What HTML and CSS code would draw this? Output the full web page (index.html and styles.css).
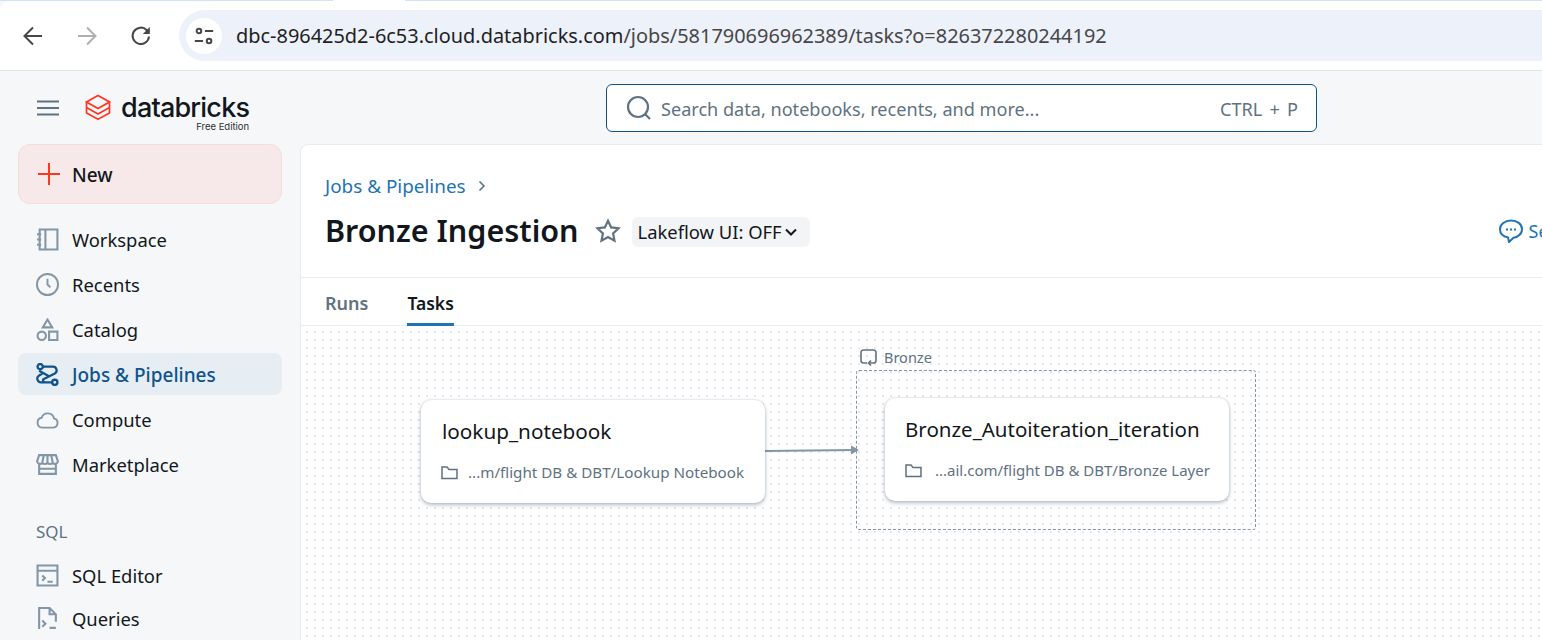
FILE: index.html
```html
<!doctype html>
<html>
<head>
  <title>Bronze Ingestion</title>
  <meta charset="utf-8">
  <link rel="stylesheet" href="styles.css">
</head>
<body>
  <div class="tabstrip">
    <div class="tabstrip-part"></div>
    <div class="tabstrip-gap"></div>
    <div class="tabstrip-rest"></div>
  </div>
  <div class="toolbar">
    <svg class="nav-icon" viewBox="0 0 24 24" fill="none" stroke="#474747" stroke-width="2"><path d="M21 12H4M12 3.500 3.500 12l8.500 8.500"/></svg>
    <svg class="nav-icon" viewBox="0 0 24 24" fill="none" stroke="#b0b0b0" stroke-width="2"><path d="M3 12h17M12 3.500l8.500 8.500-8.500 8.500"/></svg>
    <svg class="nav-icon" viewBox="0 0 24 24" fill="none" stroke="#474747" stroke-width="2"><path d="M20 12.500A8.200 8.200 0 1 1 17.800 6.200L20 8.500"/><path d="M20.800 3v7h-7" stroke="none" fill="#474747"/></svg>
    <div class="omnibox">
      <div class="site-btn">
        <svg width="22" height="22" viewBox="0 0 24 24" fill="none" stroke="#474747" stroke-width="2.200"><circle cx="6.500" cy="6.500" r="2.500"/><path d="M13 6.500h9M2 17.500h9"/><circle cx="17.500" cy="17.500" r="2.500"/></svg>
      </div>
      <div class="url"><span class="url-host">dbc-896425d2-6c53.cloud.databricks.com</span>/jobs/581790696962389/tasks?o=826372280244192</div>
    </div>
  </div>

  <div class="app">
    <div class="topbar">
      <div class="brand">
        <svg class="burger" viewBox="0 0 22 16" fill="none" stroke="#5f7281" stroke-width="2"><path d="M0 1.500h22M0 8h22M0 14.500h22"/></svg>
        <svg class="logo-mark" viewBox="0 0 26 26" fill="none" stroke="#ff3621" stroke-width="1.700"><path d="M1.500 8 13 1.500 24.500 8 13 14.500 1.500 8Z"/><path d="M1.500 9v4.500L13 20l11.500-6.500V9"/><path d="M1.500 14v5L13 25.200 24.500 19v-5"/></svg>
        <div class="logo-text">
          <span class="logo-name">databricks</span>
          <span class="logo-sub">Free Edition</span>
        </div>
      </div>
      <div class="search">
        <svg width="28" height="28" viewBox="0 0 28 28" fill="none" stroke="#5f7281" stroke-width="2.200"><circle cx="13" cy="13" r="10"/><path d="m20 20 5 5"/></svg>
        <span class="search-text">Search data, notebooks, recents, and more...</span>
        <span class="search-key">CTRL + P</span>
      </div>
    </div>

    <div class="shell">
      <div class="sidebar">
        <div class="new-btn">
          <svg width="22" height="22" viewBox="0 0 22 22" fill="none" stroke="#ff3621" stroke-width="2"><path d="M11 0v22M0 11h22"/></svg>
          <span class="new-label">New</span>
        </div>
        <div class="nav">
          <div class="nav-item">
            <svg class="item-icon" viewBox="0 0 22 22" fill="none" stroke="#8296a5" stroke-width="2"><path d="M3.500 1.500h17v19h-17zM9 1.500v19M1 6h4M1 11h4M1 16h4"/></svg>
            <span>Workspace</span>
          </div>
          <div class="nav-item">
            <svg class="item-icon" viewBox="0 0 24 24" fill="none" stroke="#8296a5" stroke-width="2"><circle cx="12" cy="12" r="11"/><path d="M12 6v6l3 3"/></svg>
            <span>Recents</span>
          </div>
          <div class="nav-item">
            <svg class="item-icon" viewBox="0 0 22 22" fill="none" stroke="#8296a5" stroke-width="2"><path d="m11 1.500 4.500 7.500h-9zM12.500 13h8v8h-8z"/><circle cx="5.500" cy="17" r="4"/></svg>
            <span>Catalog</span>
          </div>
          <div class="nav-item nav-active">
            <svg class="item-icon" viewBox="0 0 22 22" fill="none" stroke="#0e538b" stroke-width="2.200"><circle cx="4" cy="3.500" r="2.500"/><circle cx="18" cy="18.500" r="2.500"/><path d="M6.500 3.500H16a3.500 3.500 0 0 1 2 6.500L7 15.500a2.500 2.500 0 0 0 1 3h7.500M3 7.500l9 5M16 18.500H5a3.500 3.500 0 0 1-2-6.500l3-2"/></svg>
            <span>Jobs &amp; Pipelines</span>
          </div>
          <div class="nav-item">
            <svg class="item-icon" viewBox="0 0 24 24" fill="none" stroke="#8296a5" stroke-width="2"><path d="M6.500 20.500a5.200 5.200 0 0 1-.6-10.300 6.700 6.700 0 0 1 12.900.7 4.900 4.900 0 0 1-.6 9.600z"/></svg>
            <span>Compute</span>
          </div>
          <div class="nav-item">
            <svg class="item-icon" viewBox="0 0 22 22" fill="none" stroke="#8296a5" stroke-width="2"><path d="M3 2h16l2 6a3 3 0 0 1-5 1.500 3.500 3.500 0 0 1-5 0 3.500 3.500 0 0 1-5 0A3 3 0 0 1 1 8zM3 11v9h16v-9M7.500 2 6 9M14.500 2 16 9M11 2v7M3 15h16"/></svg>
            <span>Marketplace</span>
          </div>
        </div>
        <div class="nav-title">SQL</div>
        <div class="nav nav-sql">
          <div class="nav-item">
            <svg class="item-icon" viewBox="0 0 22 22" fill="none" stroke="#8296a5" stroke-width="2"><path d="M1.500 1.500h19v19h-19zM1.500 6.500h19M6 11l2.500 2.500L6 16M11 17h5"/></svg>
            <span>SQL Editor</span>
          </div>
          <div class="nav-item">
            <svg class="item-icon" viewBox="0 0 22 22" fill="none" stroke="#8296a5" stroke-width="2"><path d="M3 21V1h10l6 6v7M13 1v6h6M6 13l3 3-3 3M13 20h6"/></svg>
            <span>Queries</span>
          </div>
        </div>
      </div>

      <div class="main">
        <div class="job-head">
          <div class="crumb">
            <span>Jobs &amp; Pipelines</span>
            <svg width="8" height="12" viewBox="0 0 8 12" fill="none" stroke="#5f7281" stroke-width="1.600"><path d="m1.500 1.500 4.500 4.500-4.500 4.500"/></svg>
          </div>
          <div class="title-row">
            <h1>Bronze Ingestion</h1>
            <svg class="star" viewBox="0 0 24 24" fill="none" stroke="#5f7281" stroke-width="2"><path d="m12 2.500 2.900 6.200 6.800.8-5 4.700 1.300 6.800-6-3.400-6 3.400 1.300-6.800-5-4.700 6.800-.8z"/></svg>
            <div class="lakeflow">
              Lakeflow UI: OFF
              <svg width="12" height="8" viewBox="0 0 12 8" fill="none" stroke="#11171c" stroke-width="2"><path d="m1 1.500 5 5 5-5"/></svg>
            </div>
            <div class="feedback">
              <svg width="24" height="24" viewBox="0 0 24 24" fill="none" stroke="#2272b4" stroke-width="2"><path d="M12 1.500c6 0 11 3.500 11 8.700s-5 8.300-8.500 8.600L10 23l-1-4.500c-4-.8-8-3.500-8-8.300S6 1.500 12 1.500z"/><path d="M7 10.500h2M11 10.500h2M15 10.500h2"/></svg>
              <span>Send feedback</span>
            </div>
          </div>
        </div>
        <div class="tabs">
          <div class="tab">Runs</div>
          <div class="tab tab-active">Tasks</div>
        </div>

        <div class="canvas">
          <svg class="edge" width="100" height="12" viewBox="0 0 100 12">
            <path d="M0 7 90 6" stroke="#8296a5" stroke-width="2" fill="none"/>
            <path d="M86 1.500 94 6l-8 4.500z" fill="#8296a5"/>
          </svg>

          <div class="group-label">
            <svg width="17" height="17" viewBox="0 0 17 17" fill="none" stroke="#5f7281" stroke-width="1.600"><path d="M7 14H3.500A2.500 2.500 0 0 1 1 11.500v-8A2.500 2.500 0 0 1 3.500 1h10A2.500 2.500 0 0 1 16 3.500v8a2.500 2.500 0 0 1-2.500 2.500H9"/><path d="M11 11.500 8.500 14l2.500 2.500"/></svg>
            Bronze
          </div>
          <div class="group"></div>

          <div class="task task-lookup">
            <div class="task-name">lookup_notebook</div>
            <div class="task-path">
              <svg class="folder" viewBox="0 0 17 15" fill="none" stroke="#5f7281" stroke-width="1.500"><path d="M1 2h5l2 2.500h8V13.500H1z"/></svg>
              <span>...m/flight DB &amp; DBT/Lookup Notebook</span>
            </div>
          </div>

          <div class="task task-bronze">
            <div class="task-name">Bronze_Autoiteration_iteration</div>
            <div class="task-path">
              <svg class="folder" viewBox="0 0 17 15" fill="none" stroke="#5f7281" stroke-width="1.500"><path d="M1 2h5l2 2.500h8V13.500H1z"/></svg>
              <span>...ail.com/flight DB &amp; DBT/Bronze Layer</span>
            </div>
          </div>
        </div>
      </div>
    </div>
  </div>
</body>
</html>
```

FILE: styles.css
```css
html, body {
  margin: 0;
  height: 640px;
  overflow: hidden;
}
body {
  background-color: #f6f7f9;
  color: #11171c;
  font-family: "Noto Sans", "Open Sans", Arial, sans-serif;
}
svg {
  display: block;
  flex: none;
}

/* browser chrome */
.tabstrip {
  display: flex;
  height: 1px;
}
.tabstrip-part {
  width: 333px;
  background-color: #d3e3fd;
}
.tabstrip-gap {
  width: 72px;
  background-color: #fff;
}
.tabstrip-rest {
  flex: 1;
  background-color: #d3e3fd;
}
.toolbar {
  display: flex;
  align-items: center;
  height: 69px;
  padding-left: 21px;
  background-color: #fff;
  border-bottom: 1px solid #e1e3e1;
  border-top-left-radius: 10px;
}
.nav-icon {
  width: 24px;
  height: 24px;
  margin-right: 30px;
}
.omnibox {
  display: flex;
  align-items: center;
  flex: 1;
  height: 51px;
  margin-left: -4px;
  padding-left: 7px;
  background-color: #ecf1fa;
  border-radius: 26px 0 0 26px;
}
.site-btn {
  display: flex;
  align-items: center;
  justify-content: center;
  width: 36px;
  height: 36px;
  background-color: #fff;
  border-radius: 50%;
}
.url {
  margin-left: 14px;
  font-size: 19.930px;
  color: #474747;
  white-space: nowrap;
}
.url-host {
  color: #1f1f1f;
}

/* app header */
.topbar {
  display: flex;
  align-items: center;
  height: 73px;
}
.brand {
  display: flex;
  align-items: center;
  width: 606px;
  padding-left: 37px;
  box-sizing: border-box;
}
.burger {
  width: 22px;
  height: 16px;
}
.logo-mark {
  width: 26px;
  height: 26px;
  margin-left: 26px;
  margin-top: -2px;
}
.logo-text {
  display: flex;
  flex-direction: column;
  align-items: flex-end;
  margin-left: 10px;
  margin-top: 12px;
}
.logo-name {
  font-family: Inter, sans-serif;
  font-size: 27px;
  font-weight: 500;
  line-height: 26px;
  letter-spacing: -0.800px;
}
.logo-sub {
  font-family: Inter, sans-serif;
  font-size: 9.500px;
  line-height: 11px;
  color: #2a3138;
}
.search {
  display: flex;
  align-items: center;
  width: 711px;
  height: 48px;
  box-sizing: border-box;
  padding: 0 18px 0 18px;
  background-color: #fff;
  border: 1px solid #0e538b;
  border-radius: 6px;
}
.search-text {
  flex: 1;
  margin-left: 8px;
  padding-top: 2px;
  font-size: 18.100px;
  color: #5f7281;
}
.search-key {
  padding-top: 2px;
  font-size: 18.100px;
  color: #5f7281;
  word-spacing: 2.500px;
}

/* sidebar */
.shell {
  display: flex;
}
.sidebar {
  width: 300px;
  flex: none;
  box-sizing: border-box;
  padding: 0 18px;
}
.new-btn {
  display: flex;
  align-items: center;
  gap: 12px;
  height: 60px;
  box-sizing: border-box;
  padding-left: 19px;
  font-size: 19px;
  font-weight: 500;
  background-color: #f7e9e9;
  border: 1px solid #f6dcdc;
  border-radius: 12px;
}
.new-label {
  margin-top: 2px;
}
.nav {
  display: flex;
  flex-direction: column;
  gap: 3px;
  margin-top: 14px;
}
.nav-item {
  display: flex;
  align-items: center;
  gap: 13px;
  height: 42px;
  padding-left: 18px;
  font-size: 18.400px;
  border-radius: 8px;
}
.nav-active {
  color: #0e538b;
  font-size: 19px;
  font-weight: 500;
  background-color: #e6edf3;
}
.nav-active span {
  margin-top: 2px;
}
.item-icon {
  width: 23px;
  height: 23px;
}
.nav-title {
  margin-top: 35px;
  padding-left: 18px;
  font-size: 17px;
  line-height: 24px;
  color: #5f7281;
}
.nav-sql {
  gap: 1px;
  margin-top: 10px;
}

/* job page */
.main {
  flex: 1;
  height: 496px;
  background-color: #fff;
  border-top: 1px solid #e8ecf0;
  border-left: 1px solid #e8ecf0;
  border-top-left-radius: 8px;
  min-width: 0;
  overflow: hidden;
}
.job-head {
  height: 133px;
  box-sizing: border-box;
  padding: 28px 0 0 24px;
  border-bottom: 1px solid #e8ecf0;
}
.crumb {
  display: flex;
  align-items: center;
  gap: 12px;
  font-size: 18.900px;
  line-height: 26px;
  color: #2272b4;
}
.title-row {
  display: flex;
  align-items: center;
  margin-top: 11px;
  height: 44px;
  white-space: nowrap;
}
h1 {
  margin: 0 0 4px;
  font-size: 30.500px;
  font-weight: 600;
}
.star {
  width: 26px;
  height: 26px;
  margin: 0 0 3px 16px;
}
.lakeflow {
  display: flex;
  align-items: center;
  gap: 3px;
  height: 30px;
  margin: 0 0 1px 11px;
  padding: 0 13px 0 6px;
  font-size: 18.400px;
  background-color: #f2f4f6;
  border-radius: 6px;
}
.feedback {
  display: flex;
  align-items: center;
  gap: 6px;
  margin: 0 0 2px 689px;
  font-size: 18px;
  color: #2272b4;
}
.tabs {
  display: flex;
  gap: 39px;
  height: 48px;
  box-sizing: border-box;
  padding-left: 24px;
  border-bottom: 1px solid #e8ecf0;
}
.tab {
  height: 48px;
  box-sizing: border-box;
  padding-top: 13px;
  font-size: 18px;
  font-weight: 600;
  color: #5f7281;
}
.tab-active {
  font-size: 17.500px;
  color: #11171c;
  border-bottom: 3px solid #2272b4;
}

/* task graph */
.canvas {
  position: relative;
  height: 314px;
  background-image: radial-gradient(circle, #e4e7eb 0.800px, transparent 0.900px);
  background-size: 8px 8px;
  background-position: 2px 2px;
}
.edge {
  position: absolute;
  left: 464px;
  top: 118px;
}
.group {
  position: absolute;
  left: 555px;
  top: 44px;
  width: 398px;
  height: 158px;
  border: 1px dashed #8296a5;
  border-radius: 3px;
}
.group-label {
  position: absolute;
  left: 559px;
  top: 20px;
  display: flex;
  align-items: center;
  gap: 7px;
  font-size: 14.500px;
  line-height: 22px;
  color: #5f7281;
}
.task {
  position: absolute;
  width: 344px;
  height: 103px;
  box-sizing: border-box;
  padding: 16px 20px 0;
  background-color: #fff;
  border-radius: 10px;
  box-shadow: 0 0 2px rgba(95, 114, 129, 0.300), 0 2px 4px rgba(95, 114, 129, 0.450);
}
.task-lookup {
  left: 120px;
  top: 74px;
}
.task-bronze {
  left: 584px;
  top: 72px;
}
.task-name {
  font-size: 20.500px;
  line-height: 30px;
  white-space: nowrap;
}
.task-lookup .task-name {
  margin-left: 1px;
  font-size: 20.700px;
}
.task-path {
  display: flex;
  align-items: center;
  margin-top: 15px;
  font-size: 15.200px;
  line-height: 22px;
  color: #5f7281;
  white-space: nowrap;
}
.folder {
  width: 17px;
  height: 15px;
  margin-right: 10px;
}
.task-bronze .task-path {
  font-size: 15px;
}
.task-bronze .folder {
  margin-right: 13px;
}
```
